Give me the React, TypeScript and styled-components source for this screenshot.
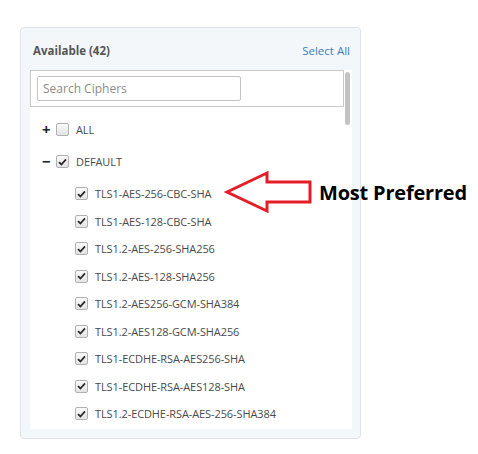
import styled, { createGlobalStyle } from 'styled-components';

const GlobalStyle = createGlobalStyle`
  * {
    box-sizing: border-box;
  }
  body {
    margin: 0;
    background: #fff;
    font-family: 'Open Sans', 'Liberation Sans', sans-serif;
  }
`;

const Page = styled.div`
  position: relative;
  width: 478px;
  height: 454px;
  padding: 27px 0 0 20px;
`;

const Panel = styled.div`
  width: 341px;
  height: 412px;
  background: #f4f7fa;
  border: 1px solid #dfe3e8;
  border-radius: 4px;
  padding: 0 8px 9px 9px;
  display: flex;
  flex-direction: column;
`;

const PanelHeader = styled.div`
  height: 42px;
  display: flex;
  align-items: center;
  justify-content: space-between;
  padding: 2px 2px 0 3px;
  font-size: 11.5px;
`;

const Title = styled.span`
  font-weight: 700;
  color: #555;
`;

const LinkButton = styled.span`
  color: #3a7fc1;
`;

const ListBox = styled.div`
  position: relative;
  flex: 1;
  background: #fff;
  display: flex;
  flex-direction: column;
`;

const SearchBar = styled.div`
  height: 37px;
  margin-right: 8px;
  border: 1px solid #c9c9c9;
  padding: 5px 0 0 6px;
`;

const SearchInput = styled.input`
  width: 204px;
  height: 25px;
  border: 1px solid #c4c4c4;
  border-radius: 2px;
  padding: 0 5px;
  font-family: inherit;
  font-size: 12px;
  color: #555;
  &::placeholder {
    color: #8c8c8c;
  }
  &:focus {
    outline: none;
  }
`;

const ScrollThumb = styled.div`
  position: absolute;
  top: 2px;
  right: 2px;
  width: 5px;
  height: 53px;
  border-radius: 3px;
  background: #c3c3c3;
`;

const Tree = styled.div`
  padding-top: 9px;
`;

const Row = styled.div<{ $indent: number; $height: number }>`
  height: ${(p) => p.$height}px;
  display: flex;
  align-items: center;
  padding-left: ${(p) => p.$indent}px;
  font-size: 11px;
  color: #4a4a4a;
  letter-spacing: -0.1px;
`;

const Toggle = styled.span`
  width: 14px;
  font-size: 15px;
  font-weight: 700;
  color: #222;
  line-height: 1;
`;

const Box = styled.span<{ $checked: boolean }>`
  width: 13px;
  height: 13px;
  margin-right: 7px;
  border: 1px solid #b0b0b0;
  border-radius: 2px;
  background: linear-gradient(#fafafa, #e4e4e4);
  display: flex;
  align-items: center;
  justify-content: center;
  svg {
    display: ${(p) => (p.$checked ? 'block' : 'none')};
  }
`;

const Annotation = styled.div`
  position: absolute;
  left: 224px;
  top: 169px;
  display: flex;
  align-items: center;
  gap: 5px;
`;

const Note = styled.span`
  font-family: 'Open Sans', 'Liberation Sans', sans-serif;
  font-weight: 700;
  font-size: 20px;
  color: #000;
  letter-spacing: -0.2px;
`;

const Check = () => (
  <svg width='9' height='8' viewBox='0 0 9 8'>
    <path d='M1 4.2 L3.4 6.5 L8 1.3' fill='none' stroke='#2b2b2b' strokeWidth='1.8' />
  </svg>
);

const ciphers = [
  'TLS1-AES-256-CBC-SHA',
  'TLS1-AES-128-CBC-SHA',
  'TLS1.2-AES-256-SHA256',
  'TLS1.2-AES-128-SHA256',
  'TLS1.2-AES256-GCM-SHA384',
  'TLS1.2-AES128-GCM-SHA256',
  'TLS1-ECDHE-RSA-AES256-SHA',
  'TLS1-ECDHE-RSA-AES128-SHA',
  'TLS1.2-ECDHE-RSA-AES-256-SHA384',
];

export default function App() {
  return (
    <Page>
      <GlobalStyle />
      <Panel>
        <PanelHeader>
          <Title>Available (42)</Title>
          <LinkButton>Select All</LinkButton>
        </PanelHeader>
        <ListBox>
          <SearchBar>
            <SearchInput placeholder='Search Ciphers' />
          </SearchBar>
          <ScrollThumb />
          <Tree>
            <Row $indent={12} $height={27}>
              <Toggle>+</Toggle>
              <Box $checked={false}>
                <Check />
              </Box>
              ALL
            </Row>
            <Row $indent={12} $height={37}>
              <Toggle>−</Toggle>
              <Box $checked>
                <Check />
              </Box>
              DEFAULT
            </Row>
            {ciphers.map((name) => (
              <Row key={name} $indent={45} $height={27.5}>
                <Box $checked>
                  <Check />
                </Box>
                {name}
              </Row>
            ))}
          </Tree>
        </ListBox>
      </Panel>

      <Annotation>
        <svg width='90' height='46' viewBox='0 0 90 46'>
          <path
            d='M3 23 L43 4 L43 13 L86 13 L86 33 L43 33 L43 42 Z'
            fill='none'
            stroke='#e51d26'
            strokeWidth='3'
            strokeLinejoin='miter'
          />
        </svg>
        <Note>Most Preferred</Note>
      </Annotation>
    </Page>
  );
}
